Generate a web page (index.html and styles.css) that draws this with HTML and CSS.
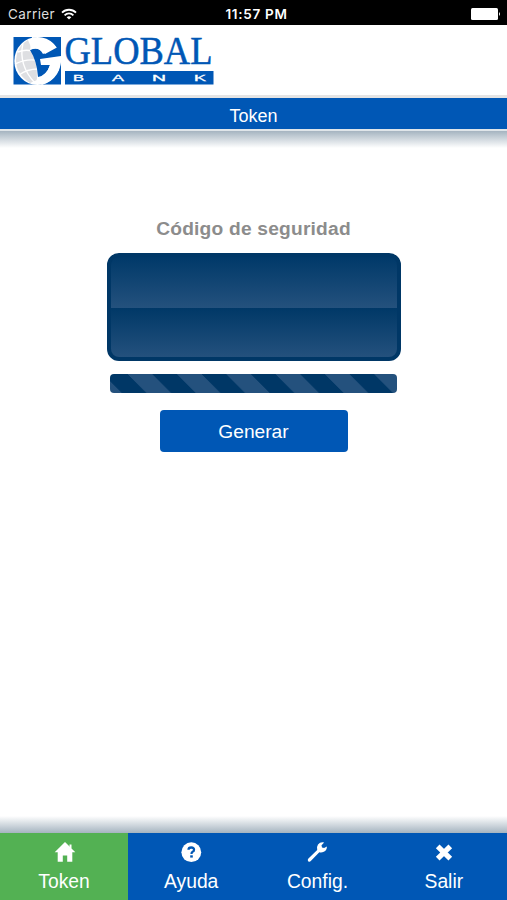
FILE: index.html
```html
<!DOCTYPE html>
<html lang="es">
<head>
    <meta charset="UTF-8">
    <meta name="viewport" content="width=device-width, initial-scale=1.0">
    <title>Token</title>
    <link rel="stylesheet" href="styles.css">
</head>
<body>
    <div class="status-bar">
        <div class="carrier">
            <span>Carrier</span>
            <svg width="16" height="12" viewBox="0 0 16 12" fill="none" stroke="#fff" stroke-width="1.8">
                <path d="M1 4.6a10 10 0 0 1 14 0"/>
                <path d="M3.6 7.3a6.2 6.2 0 0 1 8.8 0"/>
                <path d="M8 11.6 5.7 9.3a3.3 3.3 0 0 1 4.6 0z" fill="#fff" stroke="none"/>
            </svg>
        </div>
        <div class="time">11:57 PM</div>
        <div class="battery">
            <svg width="30" height="12" viewBox="0 0 30 12" fill="#fff">
                <rect x="0" y="0" width="27" height="12" rx="1.5"/>
                <path d="M28 4q2 2 0 4z"/>
            </svg>
        </div>
    </div>

    <header class="header">
        <svg class="logo" width="204" height="48" viewBox="0 0 204 48">
            <rect x="0.5" width="47.5" height="47.5" fill="#0057b5"/>
            <ellipse cx="24.5" cy="24" rx="23.2" ry="24" fill="#fff"/>
            <!-- globe -->
            <path d="M15 3Q4 9 3 23Q3 37 17 46L24 43Q25 24 15 3z" fill="#dedfe2"/>
            <g fill="none" stroke="#fff" stroke-width="1.4">
                <path d="M10 6Q5 28 22 46"/>
                <path d="M5 15Q12 12 19 14"/>
                <path d="M2 27Q12 22 22 23"/>
                <path d="M6 38Q14 32 25 32"/>
            </g>
            <path d="M17 13Q24 8 32 17L43 11L48 8V21L29 23V28L37 28Q34 38 25 40Q24 24 17 13z" fill="#0057b5"/>
            <path d="M19 0Q36 0 43 10L30 17Q26 9 17 13z" fill="#fff"/>
            <path d="M27 22L48 19V25Q45 42 29 48L23 43Q34 38 37 28H28z" fill="#fff"/>
            <text class="logo-name" x="51.500" y="27" textLength="148" lengthAdjust="spacingAndGlyphs">GLOBAL</text>
            <rect x="52" y="34" width="148.500" height="13.500" fill="#0057b5"/>
            <g class="logo-sub">
                <text x="60" y="43.800" textLength="11" lengthAdjust="spacingAndGlyphs">B</text>
                <text x="99" y="43.800" textLength="12" lengthAdjust="spacingAndGlyphs">A</text>
                <text x="139" y="43.800" textLength="14" lengthAdjust="spacingAndGlyphs">N</text>
                <text x="181" y="43.800" textLength="12" lengthAdjust="spacingAndGlyphs">K</text>
            </g>
        </svg>
    </header>

    <h1 class="title">Token</h1>

    <main class="content">
        <h2 class="label">Código de seguridad</h2>
        <div class="code-box"></div>
        <div class="progress"></div>
        <button class="btn">Generar</button>
    </main>

    <nav class="tabs">
        <a class="tab active">
            <svg class="home" width="22" height="22" viewBox="0 0 22 22" fill="#fff">
                <path d="M11 1 21.300 11.200H18.300V20.800H13.200V14.500H8.800V20.800H3.700V11.200H.7z"/>
                <path d="M15.500 3.500h2v4h-2z"/>
            </svg>
            <span>Token</span>
        </a>
        <a class="tab">
            <svg width="22" height="22" viewBox="0 0 22 22">
                <circle cx="11.300" cy="11.200" r="9.900" fill="#fff"/>
                <path d="M8.500 8.800Q8.500 6.500 11.300 6.500T14 8.700Q14 10.200 12.600 10.800Q11.500 11.300 11.500 12.900" fill="none" stroke="#0057b5" stroke-width="2.300"/>
                <path d="M10.200 14.300h2.600v2.300H10.200z" fill="#0057b5"/>
            </svg>
            <span>Ayuda</span>
        </a>
        <a class="tab">
            <svg width="22" height="22" viewBox="0 0 22 22" fill="#fff">
                <path d="M18.200 1.600 15.500 4.300 16 6.500 18.100 7 20.900 5.400Q21 9.300 17.800 10.800Q15.500 11.800 13.300 11.200L4.800 20Q3.500 21.300 2.200 20.200Q1.200 18.900 2.200 17.700L11.200 9Q10.500 5.800 12 3.600Q14.500.5 18.200 1.600z"/>
            </svg>
            <span>Config.</span>
        </a>
        <a class="tab">
            <svg width="22" height="22" viewBox="0 0 22 22">
                <path d="M4.700 5.300 17.300 17.700M17.300 5.300 4.700 17.700" stroke="#fff" stroke-width="5.200"/>
            </svg>
            <span>Salir</span>
        </a>
    </nav>
</body>
</html>
```
FILE: styles.css
```css
* {
    box-sizing: border-box;
}

body {
    margin: 0;
    height: 100vh;
    display: flex;
    flex-direction: column;
    font-family: "Liberation Sans", Arial, sans-serif;
    background-color: #fff;
    overflow: hidden;
}

.status-bar {
    height: 25px;
    display: grid;
    grid-template-columns: 1fr auto 1fr;
    align-items: center;
    padding: 2px 6px 0 8px;
    background-color: #000;
    color: #fff;
    font-family: Inter, sans-serif;
    font-size: 13.5px;
    letter-spacing: 0.4px;
}

.carrier {
    display: flex;
    align-items: center;
    gap: 6px;
    color: #ddd;
}

.time {
    font-size: 13.5px;
    font-weight: 600;
    letter-spacing: 0.7px;
    padding-left: 4px;
}

.battery {
    display: flex;
    justify-content: flex-end;
}

.header {
    height: 73px;
    padding: 12px 13px 0;
    border-bottom: 3px solid #e4e4e4;
}

.logo {
    display: block;
    overflow: visible;
}

.logo-name {
    font-family: "Liberation Serif", serif;
    font-size: 39px;
    fill: #0057b5;
    stroke: #0057b5;
    stroke-width: 0.5;
}

.logo-sub {
    font-family: "Liberation Sans", sans-serif;
    font-size: 9px;
    fill: #fff;
    stroke: #fff;
    stroke-width: 0.3;
}

.title {
    height: 31px;
    margin: 0;
    background-color: #0057b5;
    color: #fff;
    font-size: 18px;
    font-weight: normal;
    line-height: 36px;
    text-align: center;
}

.content {
    flex: 1;
    display: flex;
    flex-direction: column;
    align-items: center;
    padding-top: 86px;
    border-top: 2px solid #dfe5e9;
    background-image: linear-gradient(#a5b4c0, #fff), linear-gradient(#fff, #a5b4c0);
    background-size: 100% 17px;
    background-position: top, bottom;
    background-repeat: no-repeat;
}

.label {
    margin: 0;
    color: #8c8c8c;
    font-size: 19.2px;
    line-height: 24px;
    letter-spacing: 0.2px;
}

.code-box {
    width: 294px;
    height: 108px;
    margin-top: 12px;
    border: 4px solid #003766;
    border-radius: 12px;
    background-image: linear-gradient(#003969, #24517d 51%, #003867 51%, #24517d);
}

.progress {
    width: 287px;
    height: 19px;
    margin-top: 13px;
    border-radius: 4px;
    background-color: #003766;
    background-image: linear-gradient(45deg, #24517d 25%, transparent 25%, transparent 50%, #24517d 50%, #24517d 75%, transparent 75%);
    background-size: 49.3px 49.3px;
    background-position: 18px 0;
}

.btn {
    width: 188px;
    height: 42px;
    margin-top: 17px;
    padding: 2px 0 0;
    border: none;
    border-radius: 4px;
    background-color: #0057b5;
    color: #fff;
    font-family: inherit;
    font-size: 19.2px;
}

.tabs {
    height: 67px;
    display: grid;
    grid-template-columns: 128px repeat(3, 1fr);
    background-color: #0057b5;
}

.tab {
    display: flex;
    flex-direction: column;
    align-items: center;
    padding-top: 8px;
    color: #fff;
    font-size: 19.3px;
    line-height: 22px;
}

.tab span {
    margin-top: 8px;
}

.tab .home {
    margin-left: 2px;
}

.tab.active {
    background-color: #53b153;
}
```
